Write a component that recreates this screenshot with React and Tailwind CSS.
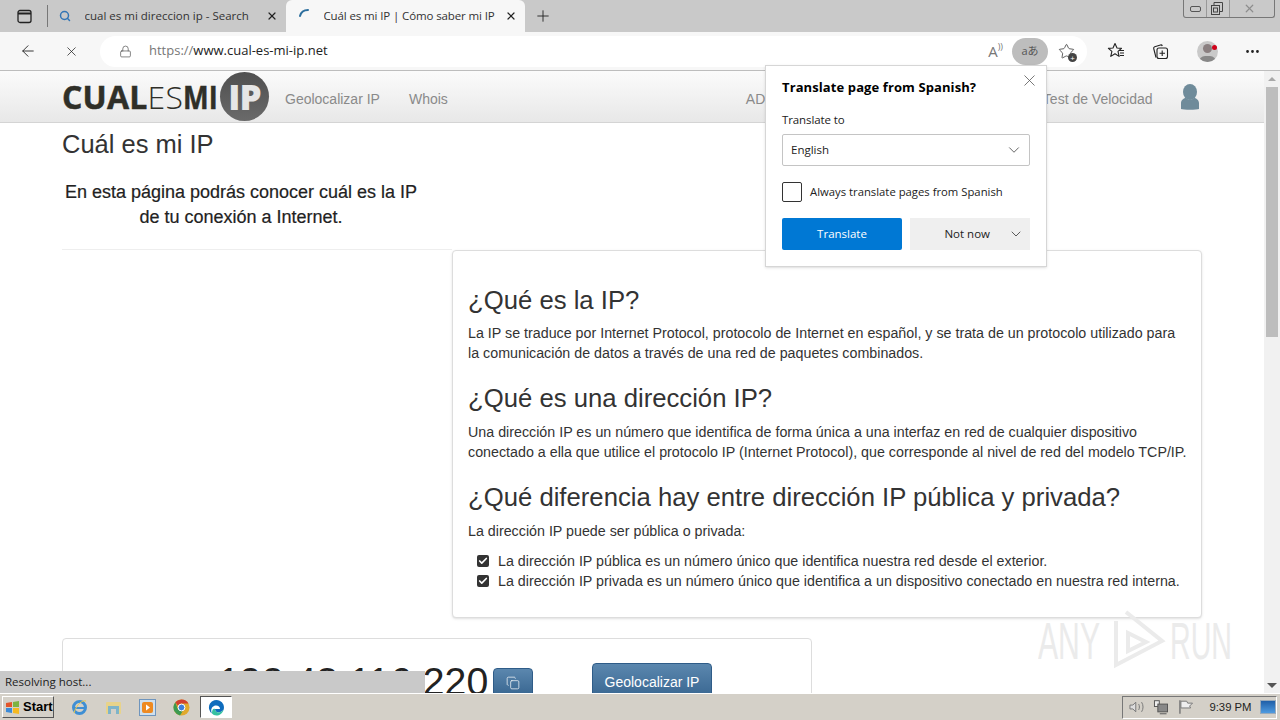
import React from "react"
import { X, ArrowLeft, Plus, Lock, Star, ChevronDown, Search, Copy, MoreHorizontal, Check } from "lucide-react"

const ui = { fontFamily: '"Open Sans", "Noto Sans", sans-serif' }

function Tab({ active, icon, title }) {
  return (
    <div
      className={`flex items-center h-[32px] w-[239px] pl-[12px] pr-[8px] text-[11.5px] text-[#333] ${
        active ? "bg-[#f7f7f7] rounded-t-[6px] tracking-[-0.12px]" : ""
      }`}
    >
      <span className="w-[26px] shrink-0 flex">{icon}</span>
      <span className="flex-1 truncate">{title}</span>
      <X size={12} strokeWidth={2.4} className="text-[#222] shrink-0" />
    </div>
  )
}

function BrowserChrome() {
  return (
    <div style={ui} className="shrink-0">
      <div className="h-[32px] bg-[#c9c9c9] flex items-center relative">
        <div className="w-[47px] flex items-center pl-[17px] h-full">
          <svg width="15" height="15" viewBox="0 0 15 15" fill="none" stroke="#222" strokeWidth="1.3">
            <rect x="1" y="1.5" width="13" height="12" rx="2" />
            <path d="M1 4.5h13" strokeWidth="2" />
          </svg>
        </div>
        <div className="w-px h-[22px] bg-[#777] -ml-[.5px] -mr-px" />
        <Tab icon={<Search size={12} strokeWidth={3} className="text-[#3275b5]" />} title="cual es mi direccion ip - Search" />
        <Tab
          active
          icon={
            <svg width="14" height="14" viewBox="0 0 14 14" fill="none" className="-mt-[4px]">
              <path d="M2 9C3 5 6 3 10 3" stroke="#2d6f9e" strokeWidth="2" strokeLinecap="round" />
            </svg>
          }
          title="Cuál es mi IP | Cómo saber mi IP"
        />
        <Plus size={18} strokeWidth={1.2} className="text-[#222] ml-[9px]" />
        <div className="absolute right-[5px] top-0 w-[92px] h-[18px] border border-t-0 border-[#777] rounded-b-[3px] flex items-center text-[#555]">
          <div className="ml-[6px] w-[11px] h-[6px] border border-[#555] rounded-[2px]" />
          <div className="ml-[5px] w-px h-full bg-[#999]" />
          <svg width="12" height="13" viewBox="0 0 12 13" fill="none" stroke="#444" className="ml-[4px]">
            <rect x="0.5" y="3.5" width="8" height="9" />
            <path d="M3 3.5V.5h8.500v9H8.500" />
            <rect x="2.5" y="6" width="4" height="4" />
          </svg>
          <div className="ml-[6px] w-px h-full bg-[#999]" />
          <X size={13} strokeWidth={2.2} className="text-[#8d8d8d] ml-[13px]" />
        </div>
      </div>
      <div className="h-[39px] bg-[#f7f7f7] border-b border-[#bdbdbd] flex items-center">
        <div className="w-[100px] flex items-center pl-[19px] gap-[27px]">
          <ArrowLeft size={18} strokeWidth={1.2} className="text-[#222]" />
          <X size={15} strokeWidth={1.2} className="text-[#222]" />
        </div>
        <div className="w-[987px] h-[31px] bg-white rounded-full flex items-center pl-[19px] pr-[12px]">
          <Lock size={13} strokeWidth={1.2} className="text-[#444]" />
          <span className="ml-[17px] text-[13px] text-[#777]">
            https://<span className="text-[#222]">www.cual-es-mi-ip.net</span>
          </span>
          <div className="flex-1" />
          <span className="text-[15px] text-[#777] mr-[9px]">A<span className="text-[9px] align-top">))</span></span>
          <div className="w-[36px] h-[27px] rounded-full bg-[#bdbdbd] flex items-center justify-center text-[11px] text-[#555] mr-[10px]" style={{ fontFamily: '"Open Sans", "Noto Sans CJK JP", sans-serif' }}>
            aあ
          </div>
          <div className="relative">
            <Star size={17} strokeWidth={1.1} className="text-[#333]" />
            <div className="absolute -right-[2px] -bottom-[2px] w-[9px] h-[9px] rounded-full bg-[#444] text-white text-[8px] leading-[9px] text-center">+</div>
          </div>
        </div>
        <div className="flex-1 flex items-center pl-[20px]">
          <svg width="18" height="18" viewBox="0 0 18 18" fill="none" stroke="#222" strokeWidth="1.1" strokeLinejoin="round">
            <path d="M8 1.500l2 4.500 4.500.4-3.500 3 1.100 5L8 11.800 3.800 14.400l1.100-5-3.500-3L6 6Z" />
            <path d="M12 8.500h5M13 11h4M13 13.500h4" />
          </svg>
          <svg width="18" height="18" viewBox="0 0 18 18" fill="none" stroke="#222" strokeWidth="1.1" className="ml-[26px]">
            <path d="M5 15.500L2.700 6.500a1.500 1.500 0 0 1 1-1.800L9.500 3a1.500 1.500 0 0 1 1.800 1" />
            <rect x="6" y="6" width="10.500" height="10.500" rx="2" />
            <path d="M11.200 8.500v5.500M8.500 11.200H14" />
          </svg>
          <div className="relative ml-[28px] w-[21px] h-[21px] rounded-full bg-[#c9c9c9] overflow-hidden flex justify-center">
            <div className="w-[9px] h-[9px] rounded-full bg-[#8a7f80] mt-[3px]" />
            <div className="absolute bottom-0 w-[17px] h-[6px] rounded-t-full bg-[#888]" />
          </div>
          <div className="w-[5px] h-[5px] rounded-full bg-[#d0021b] -ml-[6px] -mt-[8px] relative" />
          <MoreHorizontal size={17} strokeWidth={2} className="text-[#222] ml-[27px]" />
        </div>
      </div>
    </div>
  )
}

function TranslatePopup() {
  return (
    <div style={ui} className="absolute left-[765px] top-[-6px] w-[282px] h-[202px] bg-white border border-[#d6d6d6] shadow-sm px-[16px] text-[#222] z-10">
      <X size={19} strokeWidth={1} className="absolute right-[7px] top-[5px] text-[#555]" />
      <div className="mt-[11px] text-[13px] font-bold text-black leading-[20px] tracking-[0.1px]">Translate page from Spanish?</div>
      <div className="mt-[15px] text-[11.5px] leading-[16px] tracking-[-0.1px]">Translate to</div>
      <div className="mt-[6px] h-[32px] border border-[#c4c4c4] rounded-[2px] flex items-center justify-between pl-[8px] pr-[6px] text-[11.5px]">
        English
        <ChevronDown size={18} strokeWidth={1} className="text-[#333]" />
      </div>
      <div className="mt-[16px] flex items-center">
        <div className="w-[20px] h-[20px] border border-[#333] rounded-[2px]" />
        <span className="ml-[8px] text-[11.3px]">Always translate pages from Spanish</span>
      </div>
      <div className="mt-[16px] flex gap-[8px]">
        <div className="w-[120px] h-[32px] bg-[#0078d4] rounded-[2px] text-white text-[11.5px] flex items-center justify-center">Translate</div>
        <div className="w-[120px] h-[32px] bg-[#efefef] text-[11.5px] flex items-center justify-end pr-[6px]">
          <span className="mr-[18px]">Not now</span>
          <ChevronDown size={16} strokeWidth={1.2} className="text-[#333]" />
        </div>
      </div>
    </div>
  )
}

function Logo() {
  return (
    <div className="flex items-center w-[208px]">
      <span className="w-[158px] text-[32px] tracking-[0.2px] text-[#2f2f28] font-bold leading-none whitespace-nowrap" style={{ fontFamily: '"Open Sans", sans-serif', WebkitTextStroke: "0.5px #2f2f28" }}>
        CUAL
        <span className="font-light" style={{ WebkitTextStroke: "0" }}>ES</span>
        <span className="inline-block origin-left scale-x-[0.85]">MI</span>
      </span>
      <div className="w-[49px] h-[49px] rounded-full bg-gradient-to-b from-[#4f4f4f] to-[#6a6a6a] shrink-0 flex items-center justify-center text-[#e6e6e6] font-extrabold text-[35px] tracking-[-1px] leading-none" style={{ fontFamily: '"Open Sans", sans-serif' }}>
        IP
      </div>
    </div>
  )
}

function InfoCard() {
  return (
    <div className="ml-[390px] w-[750px] h-[368px] bg-white border border-[#dddddd] rounded-[4px] shadow-sm px-[15px] pt-[36px]">
      <h2 className="text-[25.7px] leading-[26px] text-[#333]">¿Qué es la IP?</h2>
      <p className="mt-[10px] text-[14.27px] leading-[20px] text-[#333] whitespace-nowrap">
        La IP se traduce por Internet Protocol, protocolo de Internet en español, y se trata de un protocolo utilizado para
        <br />
        la comunicación de datos a través de una red de paquetes combinados.
      </p>
      <h2 className="mt-[22px] text-[25.7px] leading-[26px] text-[#333]">¿Qué es una dirección IP?</h2>
      <p className="mt-[11px] text-[14.27px] leading-[20px] text-[#333] whitespace-nowrap">
        Una dirección IP es un número que identifica de forma única a una interfaz en red de cualquier dispositivo
        <br />
        conectado a ella que utilice el protocolo IP (Internet Protocol), que corresponde al nivel de red del modelo TCP/IP.
      </p>
      <h2 className="mt-[22px] text-[25.7px] leading-[26px] text-[#333] whitespace-nowrap">¿Qué diferencia hay entre dirección IP pública y privada?</h2>
      <p className="mt-[11px] text-[14.27px] leading-[20px] text-[#333]">La dirección IP puede ser pública o privada:</p>
      <ul className="mt-[10px] ml-[9px] text-[14.27px] leading-[20px] text-[#333]">
        {[
          "La dirección IP pública es un número único que identifica nuestra red desde el exterior.",
          "La dirección IP privada es un número único que identifica a un dispositivo conectado en nuestra red interna.",
        ].map((t) => (
          <li key={t} className="flex items-center whitespace-nowrap">
            <span className="w-[12px] h-[12px] rounded-[2px] bg-[#333] flex items-center justify-center mr-[9px] shrink-0">
              <Check size={10} strokeWidth={4} className="text-white" />
            </span>
            {t}
          </li>
        ))}
      </ul>
    </div>
  )
}

function Page() {
  return (
    <div className="flex-1 min-w-0 overflow-hidden bg-white" style={{ fontFamily: '"Liberation Sans", Arial, sans-serif' }}>
      <div className="h-[52px] border-b border-[#d4d4d4] bg-gradient-to-b from-[#fbfbfb] to-[#e8e8e8] pl-[62px] flex items-center text-[14px] text-[#8a8a8a]">
        <Logo />
        <span className="ml-[15px] mt-[6px]">Geolocalizar IP</span>
        <span className="ml-[29px] mt-[6px]">Whois</span>
        <span className="ml-[298px] mt-[6px] w-[37px]">ADSL</span>
        <span className="ml-[260px] mt-[6px] w-[110px] whitespace-nowrap">Test de Velocidad</span>
        <svg width="18" height="26" viewBox="0 0 18 26" className="ml-[28px]" fill="#6f8b9a">
          <ellipse cx="9" cy="8" rx="7" ry="8" />
          <path d="M0 25v-6c0-3 3-5 5-5 2 2 6 2 8 0 2 0 5 2 5 5v6c-2 1-16 1-18 0Z" />
        </svg>
      </div>
      <div className="ml-[62px] w-[1140px]">
        <h1 className="mt-[5px] text-[25.5px] leading-[32px] text-[#333]">Cuál es mi IP</h1>
        <p className="mt-[20px] w-[358px] text-center text-[18px] leading-[25px] text-[#222]" style={{ WebkitTextStroke: "0.2px #222" }}>
          En esta página podrás conocer cuál es la IP de tu conexión a Internet.
        </p>
        <div className="mt-[19px] h-px w-[390px] bg-[#eeeeee]" />
        <InfoCard />
        <div className="mt-[20px] w-[750px] h-[120px] bg-white border border-[#dddddd] rounded-[4px] flex items-start">
          <div className="ml-[155px] mt-[20px] w-[271px] text-[39.3px] leading-[44px] text-[#222] whitespace-nowrap">192.43.116.220</div>
          <div className="ml-[4px] mt-[29px] w-[40px] h-[30px] rounded-[4px] bg-gradient-to-b from-[#5b87ae] to-[#36648f] border border-[#2f5c88] flex items-center justify-center">
            <Copy size={14} strokeWidth={1.2} className="text-white" />
          </div>
          <div className="ml-[59px] mt-[24px] w-[120px] h-[38px] rounded-[4px] bg-gradient-to-b from-[#5b87ae] to-[#36648f] border border-[#2f5c88] flex items-center justify-center text-[14px] text-white">
            Geolocalizar IP
          </div>
        </div>
      </div>
    </div>
  )
}

function Scrollbar() {
  return (
    <div className="w-[16px] shrink-0 bg-[#f1f1f1] flex flex-col items-center">
      <div className="h-[16px] flex items-center">
        <div className="w-0 h-0 border-x-[4px] border-x-transparent border-b-[4px] border-b-[#a8a8a8]" />
      </div>
      <div className="w-[12px] h-[250px] bg-[#bdbdbd]" />
      <div className="flex-1" />
      <div className="h-[16px] flex items-center">
        <div className="w-0 h-0 border-x-[5px] border-x-transparent border-t-[5px] border-t-[#555]" />
      </div>
    </div>
  )
}

function Taskbar() {
  return (
    <div className="h-[27px] shrink-0 bg-[#d4d0c8] border-t border-[#fff] flex items-center relative" style={{ fontFamily: '"Liberation Sans", Tahoma, sans-serif' }}>
      <div className="ml-[2px] w-[52px] h-[22px] border border-t-white border-l-white border-b-[#555] border-r-[#555] flex items-center gap-[3px] pl-[2px] text-[13px] font-bold text-black">
        <svg width="15" height="15" viewBox="0 0 15 15">
          <path d="M1 3l6-1v5H1Z" fill="#e2552b" />
          <path d="M8 2l6-1v6H8Z" fill="#7cb342" />
          <path d="M1 8h6v5l-6-1Z" fill="#3b8ad8" />
          <path d="M8 8h6v6l-6-1Z" fill="#f5b921" />
        </svg>
        Start
      </div>
      <div className="ml-[17px] flex items-center gap-[17px]">
        <svg width="17" height="17" viewBox="0 0 17 17" fill="none">
          <circle cx="8.5" cy="8.5" r="6" stroke="#3f8fd4" strokeWidth="3" />
          <path d="M2 9h13" stroke="#3f8fd4" strokeWidth="2" />
          <path d="M3 14C6 4 12 1 15 2" stroke="#e8c84a" strokeWidth="1" />
        </svg>
        <svg width="17" height="16" viewBox="0 0 17 16">
          <rect x="1" y="3" width="15" height="12" rx="1" fill="#e8d38a" />
          <rect x="3" y="7" width="11" height="8" fill="#7fb4c9" />
          <rect x="6" y="10" width="5" height="5" fill="#d4d0c8" />
        </svg>
        <svg width="17" height="17" viewBox="0 0 17 17">
          <rect x="0.5" y="0.5" width="16" height="16" fill="#cfe0ee" stroke="#6f95bd" />
          <rect x="3" y="3" width="11" height="11" rx="2" fill="#ee8a21" />
          <path d="M7 5.5l4 3-4 3Z" fill="#fff" />
        </svg>
        <svg width="17" height="17" viewBox="0 0 17 17">
          <circle cx="8.5" cy="8.5" r="8" fill="#e0a92e" />
          <path d="M8.5.5a8 8 0 0 1 7 4H8.5a4 4 0 0 0-3.6 2.2L2.3 3.3A8 8 0 0 1 8.5.5Z" fill="#d23f31" />
          <path d="M.9 6A8 8 0 0 0 7 16.4l2.5-4L5 10.5 2.3 3.3Z" fill="#3c9a52" />
          <circle cx="8.5" cy="8.5" r="3.4" fill="#3f7fdc" stroke="#fff" />
        </svg>
      </div>
      <div className="ml-[10px] w-[32px] h-[22px] bg-white border border-t-[#555] border-l-[#555] border-b-white border-r-white flex items-center justify-center">
        <svg width="17" height="17" viewBox="0 0 17 17" fill="none">
          <path d="M15.5 11A7.5 7.5 0 1 0 4 14.5C2 11 4 6.5 8 6.5c2.5 0 4 1.500 4 3.500H7c0 3.500 4.500 5 8.500 1Z" fill="#0f6cbd" />
          <path d="M7 10c0 3.500 4.500 5 8.500 1-1 3.500-4 5.500-7 5.500-2 0-3.500-1-4.500-2C4 11 5 9 7 10Z" fill="#35c1a0" />
        </svg>
      </div>
      <div className="flex-1" />
      <div className="mr-[3px] w-[155px] h-[23px] border border-t-[#777] border-l-[#777] border-b-white border-r-white flex items-center text-[#444] pl-[6px]">
        <svg width="16" height="14" viewBox="0 0 16 14" fill="none" stroke="#777">
          <path d="M1 5h3l3-3v10L4 9H1Z" fill="#ddd" />
          <path d="M10 4c1 2 1 4 0 6M13 2c2 3 2 7 0 10" />
        </svg>
        <svg width="16" height="16" viewBox="0 0 16 16" className="ml-[9px]" fill="none" stroke="#555">
          <rect x="1.500" y="1.500" width="5" height="6" fill="#eee" />
          <rect x="5" y="5" width="10" height="8" fill="#888" />
          <path d="M7 15h7" />
        </svg>
        <svg width="16" height="16" viewBox="0 0 16 16" className="ml-[9px]" fill="none" stroke="#777">
          <path d="M2 1v14" strokeWidth="1.500" />
          <path d="M3 2h6l1 2h5l-3 3 1 2H3Z" fill="#eee" />
        </svg>
        <span className="ml-[16px] w-[40px] text-[11.3px] text-[#222] whitespace-nowrap">9:39 PM</span>
        <div className="ml-[11px] w-[16px] h-[14px] bg-gradient-to-b from-[#1f5fa8] to-[#4f9be0] border border-[#9ab]" />
      </div>
    </div>
  )
}

function Watermark() {
  return (
    <div className="absolute left-[1038px] top-[538px] h-[64px] flex items-center text-[52px] leading-none text-[#ebebeb] pointer-events-none" style={{ fontFamily: '"Liberation Sans", sans-serif' }}>
      <span className="w-[64px] inline-block origin-left scale-x-[0.58] whitespace-nowrap">ANY</span>
      <svg width="58" height="64" viewBox="0 0 58 64" fill="none" stroke="#ebebeb" strokeWidth="4" className="ml-[6px]">
        <path d="M8 12v44l46-24L18 3" />
        <path d="M20 24v18l18-9Z" />
      </svg>
      <span className="ml-[4px] w-[62px] inline-block origin-left scale-x-[0.55] whitespace-nowrap">RUN</span>
    </div>
  )
}

export default function App() {
  return (
    <div className="w-[1280px] h-[720px] overflow-hidden flex flex-col bg-white">
      <BrowserChrome />
      <div className="flex-1 min-h-0 flex relative">
        <Page />
        <Scrollbar />
        <TranslatePopup />
        <div className="absolute left-0 bottom-0 w-[425px] h-[22px] bg-[#c9c9c9] text-[11.5px] leading-[22px] pl-[5px] text-[#222]" style={ui}>
          Resolving host...
        </div>
        <Watermark />
      </div>
      <Taskbar />
    </div>
  )
}
